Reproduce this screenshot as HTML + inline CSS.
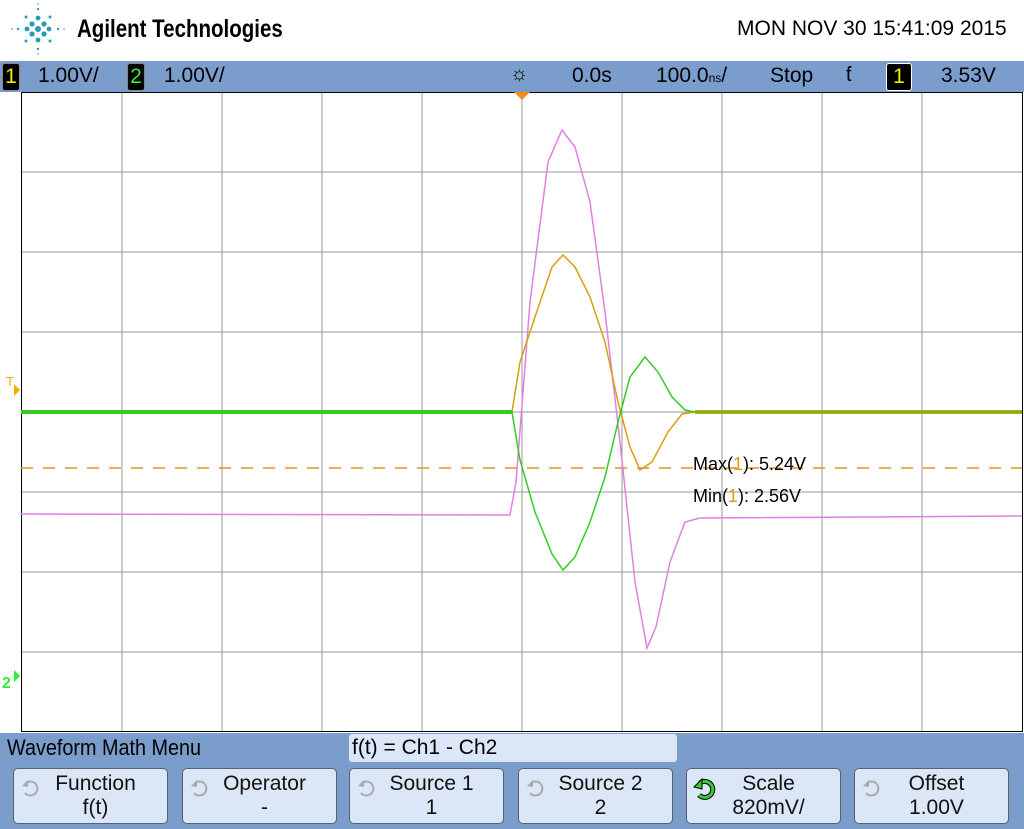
<!DOCTYPE html>
<html><head><style>
body{margin:0;width:1024px;height:829px;overflow:hidden;background:#fff;font-family:"Liberation Sans",sans-serif;position:relative}
.t{position:absolute;white-space:nowrap}
.btn{position:absolute;top:768px;width:155px;height:56px;background:#dbe6f6;border:1px solid #5b6070;border-radius:5px;box-sizing:border-box;text-align:center;font-size:21px;line-height:24px;color:#111;padding-top:3px;padding-left:10px}
.btn span{display:block}
.ic{position:absolute;left:6px;top:8px}
</style></head><body>
<svg class="t" style="left:8px;top:2px" width="60" height="56" viewBox="0 0 60 56">
<g fill="#2a9bb5">
<circle cx="30" cy="27" r="3"/><circle cx="24" cy="22" r="2.6"/><circle cx="36" cy="22" r="2.6"/><circle cx="24" cy="32" r="2.6"/><circle cx="36" cy="32" r="2.6"/><circle cx="30" cy="16" r="2.4"/><circle cx="30" cy="38" r="2.4"/><circle cx="19" cy="27" r="2.4"/><circle cx="41" cy="27" r="2.4"/>
<circle cx="18" cy="15" r="1.5"/><circle cx="42" cy="15" r="1.5"/><circle cx="18" cy="39" r="1.5"/><circle cx="42" cy="39" r="1.5"/>
<circle cx="30" cy="7" r="1.2"/><circle cx="30" cy="47" r="1.2"/><circle cx="10" cy="27" r="1.2"/><circle cx="50" cy="27" r="1.2"/><circle cx="30" cy="2" r=".8"/><circle cx="30" cy="52" r=".8"/><circle cx="4" cy="27" r=".8"/><circle cx="56" cy="27" r=".8"/>
</g></svg>
<div class="t" style="left:77px;top:15px;font-size:25px;font-weight:bold;transform:scaleX(.82);transform-origin:left">Agilent Technologies</div>
<div class="t" style="left:737px;top:17px;font-size:21px">MON NOV 30 15:41:09 2015</div>
<div style="position:absolute;left:0;top:61px;width:1024px;height:31px;background:#7b9dcc"></div>
<div class="t" style="left:2px;top:63px;width:16px;height:26px;background:#000;border:1px solid #888;border-radius:3px;color:#ee0;font-size:21px;text-align:center;line-height:26px">1</div>
<div class="t" style="left:38px;top:64px;font-size:21px">1.00V/</div>
<div class="t" style="left:127px;top:63px;width:16px;height:26px;background:#000;border:1px solid #888;border-radius:3px;color:#3e3;font-size:21px;text-align:center;line-height:26px">2</div>
<div class="t" style="left:164px;top:64px;font-size:21px">1.00V/</div>
<div class="t" style="left:510px;top:63px;font-size:20px">☼</div>
<div class="t" style="left:572px;top:64px;font-size:21px">0.0s</div>
<div class="t" style="left:656px;top:64px;font-size:21px">100.0<span style="font-size:12px">ns</span>/</div>
<div class="t" style="left:770px;top:64px;font-size:21px">Stop</div>
<div class="t" style="left:846px;top:64px;font-size:20px">ƭ</div>
<div class="t" style="left:886px;top:63px;width:24px;height:26px;background:#000;border:1px solid #fff;border-radius:3px;color:#ee0;font-size:21px;text-align:center;line-height:26px">1</div>
<div class="t" style="left:941px;top:64px;font-size:21px">3.53V</div>

<svg class="t" style="left:0;top:92px" width="1024" height="641">
<g stroke="#999" stroke-width="1">
<line x1="122" y1="0" x2="122" y2="640"/><line x1="222" y1="0" x2="222" y2="640"/><line x1="322" y1="0" x2="322" y2="640"/><line x1="422" y1="0" x2="422" y2="640"/><line x1="522" y1="0" x2="522" y2="640"/><line x1="622" y1="0" x2="622" y2="640"/><line x1="722" y1="0" x2="722" y2="640"/><line x1="822" y1="0" x2="822" y2="640"/><line x1="922" y1="0" x2="922" y2="640"/>
<line x1="21" y1="80" x2="1022" y2="80"/><line x1="21" y1="160" x2="1022" y2="160"/><line x1="21" y1="240" x2="1022" y2="240"/><line x1="21" y1="320" x2="1022" y2="320"/><line x1="21" y1="400" x2="1022" y2="400"/><line x1="21" y1="480" x2="1022" y2="480"/><line x1="21" y1="560" x2="1022" y2="560"/>
</g>
<rect x="21.5" y="0.5" width="1001" height="639" fill="none" stroke="#000"/>
<polygon points="514,0 530,0 522,8" fill="#f08c1c"/>
<line x1="21" y1="376" x2="1022" y2="376" stroke="#e39020" stroke-width="1.5" stroke-dasharray="12,10"/>
<polyline fill="none" stroke="#e080e0" stroke-width="1.5" points="21,422 510,423 516,390 530,210 548,70 562,38 575,55 590,110 605,220 620,350 635,490 647,556 656,535 670,470 685,430 700,426 1022,424"/>
<polyline fill="none" stroke="#d8a010" stroke-width="1.5" points="21,320 512,320 520,270 535,225 552,175 563,163 575,175 590,205 605,250 618,310 630,355 640,378 652,370 668,340 682,322 695,320 1022,320"/>
<polyline fill="none" stroke="#33cc22" stroke-width="1.5" points="512,320 520,368 535,420 552,462 563,478 575,465 590,430 605,385 618,330 630,285 645,265 658,280 672,305 685,318 695,320"/>
<line x1="21" y1="320" x2="512" y2="320" stroke="#33cc22" stroke-width="4"/>
<line x1="695" y1="320" x2="1022" y2="320" stroke="#d8a010" stroke-width="4"/>
<line x1="695" y1="320" x2="1022" y2="320" stroke="#33cc22" stroke-width="1.5"/>
<text x="693" y="378" font-family="Liberation Sans" font-size="18">Max(<tspan fill="#d8a010">1</tspan>): 5.24V</text>
<text x="693" y="410" font-family="Liberation Sans" font-size="18">Min(<tspan fill="#d8a010">1</tspan>): 2.56V</text>
<text x="6" y="294" font-family="Liberation Sans" font-size="13" fill="#f0b000">T</text>
<polygon points="14,292 20,298 14,304" fill="#f0b000"/>
<text x="2" y="596" font-family="Liberation Sans" font-size="16" font-weight="bold" fill="#3e3">2</text>
<polygon points="14,578 20,584 14,590" fill="#3e3"/>
</svg>

<div style="position:absolute;left:0;top:733px;width:1024px;height:96px;background:#7b9dcc"></div>
<div class="t" style="left:7px;top:735px;font-size:22px;transform:scaleX(.9);transform-origin:left">Waveform Math Menu</div>
<div class="t" style="left:349px;top:734px;width:328px;height:28px;background:#dbe6f6;border-radius:3px;font-size:21px;line-height:28px;padding-left:3px;box-sizing:border-box">f(t) = Ch1 - Ch2</div>
<div class="btn" style="left:13px"><svg class="ic" width="22" height="22"><path d="M6 6 A7 7 0 1 1 5 16" fill="none" stroke="#aaa" stroke-width="2"/><polygon points="2,9 8,3 8,10" fill="#aaa"/></svg><span>Function</span><span>f(t)</span></div>
<div class="btn" style="left:182px"><svg class="ic" width="22" height="22"><path d="M6 6 A7 7 0 1 1 5 16" fill="none" stroke="#aaa" stroke-width="2"/><polygon points="2,9 8,3 8,10" fill="#aaa"/></svg><span>Operator</span><span>-</span></div>
<div class="btn" style="left:349px"><svg class="ic" width="22" height="22"><path d="M6 6 A7 7 0 1 1 5 16" fill="none" stroke="#aaa" stroke-width="2"/><polygon points="2,9 8,3 8,10" fill="#aaa"/></svg><span>Source 1</span><span>1</span></div>
<div class="btn" style="left:518px"><svg class="ic" width="22" height="22"><path d="M6 6 A7 7 0 1 1 5 16" fill="none" stroke="#aaa" stroke-width="2"/><polygon points="2,9 8,3 8,10" fill="#aaa"/></svg><span>Source 2</span><span>2</span></div>
<div class="btn" style="left:686px"><svg class="ic" width="26" height="24"><path d="M7 6 A8 8 0 1 1 6 18" fill="none" stroke="#000" stroke-width="5"/><path d="M7 6 A8 8 0 1 1 6 18" fill="none" stroke="#3c3" stroke-width="3"/><polygon points="1,10 9,2 9,12" fill="#3c3" stroke="#000"/></svg><span>Scale</span><span>820mV/</span></div>
<div class="btn" style="left:854px"><svg class="ic" width="22" height="22"><path d="M6 6 A7 7 0 1 1 5 16" fill="none" stroke="#aaa" stroke-width="2"/><polygon points="2,9 8,3 8,10" fill="#aaa"/></svg><span>Offset</span><span>1.00V</span></div>
</body></html>
